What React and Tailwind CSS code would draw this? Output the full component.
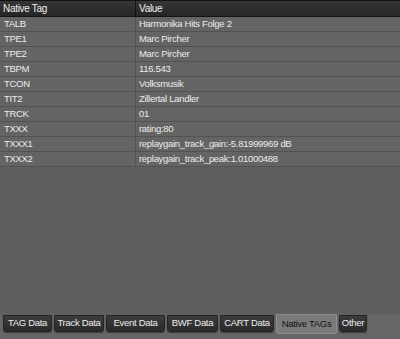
import React from "react";

const rows = [
  ["TALB", "Harmonika Hits Folge 2"],
  ["TPE1", "Marc Pircher"],
  ["TPE2", "Marc Pircher"],
  ["TBPM", "116.543"],
  ["TCON", "Volksmusik"],
  ["TIT2", "Zillertal Landler"],
  ["TRCK", "01"],
  ["TXXX", "rating:80"],
  ["TXXX1", "replaygain_track_gain:-5.81999969 dB"],
  ["TXXX2", "replaygain_track_peak:1.01000488"],
];

const tabs = [
  ["TAG Data", "w-[49px]"],
  ["Track Data", "w-[50px]"],
  ["Event Data", "w-[59px]"],
  ["BWF Data", "w-[51px]"],
  ["CART Data", "w-[54px]"],
  ["Native TAGs", "w-[61px]"],
  ["Other", "w-[28px]"],
];

export default function App() {
  return (
    <div
      className="w-[400px] h-[339px] bg-[#5f5f5f] flex flex-col overflow-hidden text-[9.5px] tracking-[-0.3px] text-[#ececec]"
      style={{ fontFamily: "'Liberation Sans', Arial, sans-serif" }}
    >
      <div className="flex h-[17px] bg-gradient-to-b from-[#363636] to-[#262626] border-t border-[#111111] border-b border-b-[#141414] text-[#f0f0f0] text-[10px]">
        <div className="w-[136px] pl-[3px] flex items-center border-r border-[#121212]">Native Tag</div>
        <div className="flex-1 pl-[3px] flex items-center">Value</div>
      </div>
      {rows.map(([k, v]) => (
        <div key={k} className="flex h-[15px] bg-[#646464] border-b border-[#525252]">
          <div className="w-[136px] pl-[4px] pt-[1px] flex items-center border-r border-[#535353] whitespace-nowrap">{k}</div>
          <div className="flex-1 pl-[3px] pt-[1px] flex items-center whitespace-nowrap">{v}</div>
        </div>
      ))}
      <div className="flex-1" />
      <div className="h-[24px] flex items-start gap-[2px] pl-[3px] bg-[#666666]">
        {tabs.map(([t, w]) =>
          t === "Native TAGs" ? (
            <div
              key={t}
              className={`${w} h-[20px] -mt-[1px] flex items-center justify-center whitespace-nowrap bg-[#7b7b7b] border border-[#8e8e8e] rounded-b-[2px] text-[#111111]`}
            >
              <span className="text-[#111111]">{t}</span>
            </div>
          ) : (
            <div
              key={t}
              className={`${w} h-[17px] flex items-center justify-center whitespace-nowrap bg-gradient-to-b from-[#3c3c3c] to-[#2b2b2b] border border-[#242424] rounded-b-[3px] shadow-[0_1px_1px_rgba(0,0,0,0.4)] text-[#ececec]`}
            >
              {t}
            </div>
          )
        )}
      </div>
    </div>
  );
}
